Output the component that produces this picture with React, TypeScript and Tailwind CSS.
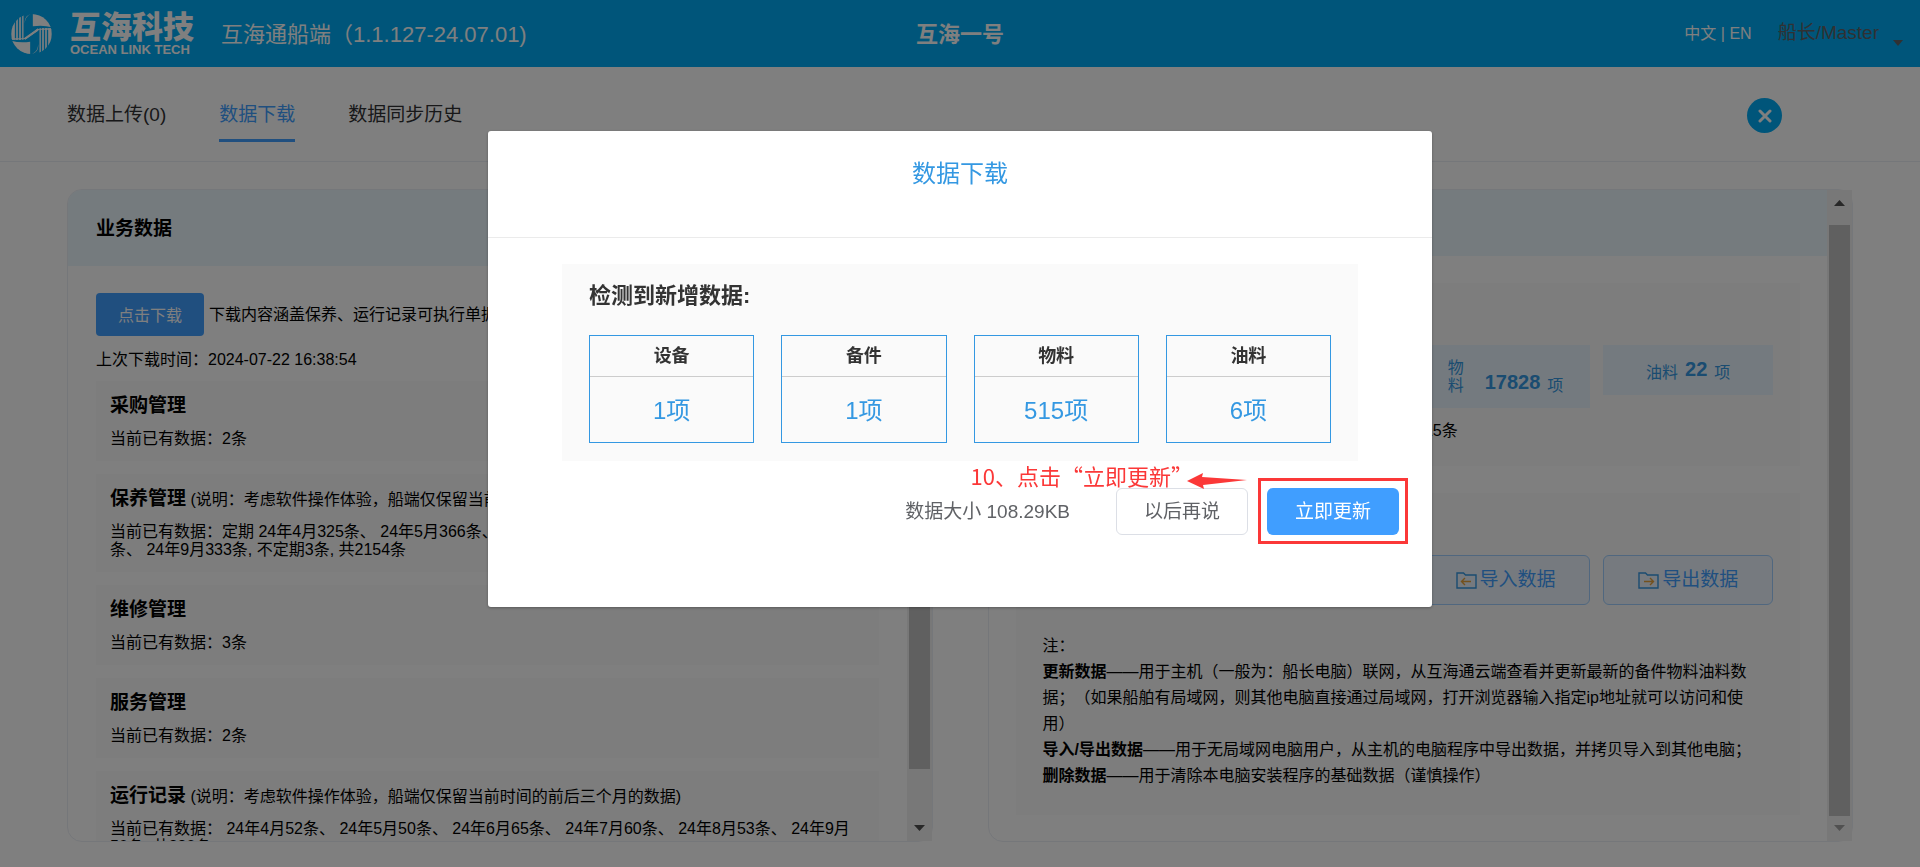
import type { ReactNode } from "react";

const tabs = ["数据上传(0)", "数据下载", "数据同步历史"];

const note = "(说明：考虑软件操作体验，船端仅保留当前时间的前后三个月的数据)";

const modules = [
  { name: "采购管理", note: "", text: "当前已有数据：2条" },
  {
    name: "保养管理",
    note,
    text: "当前已有数据：定期 24年4月325条、 24年5月366条、 24年6月371条、 24年7月378条、 24年8月378条、 24年9月333条, 不定期3条, 共2154条",
  },
  { name: "维修管理", note: "", text: "当前已有数据：3条" },
  { name: "服务管理", note: "", text: "当前已有数据：2条" },
  {
    name: "运行记录",
    note,
    text: "当前已有数据： 24年4月52条、 24年5月50条、 24年6月65条、 24年7月60条、 24年8月53条、 24年9月50条, 共330条",
  },
];

const totals = [
  { label: "设备", count: 356 },
  { label: "备件", count: 4120 },
  { label: "物料", count: 17828 },
  { label: "油料", count: 22 },
];

const updates = [
  { label: "设备", count: 1 },
  { label: "备件", count: 1 },
  { label: "物料", count: 515 },
  { label: "油料", count: 6 },
];

function Logo() {
  return (
    <svg viewBox="0 0 122 120" className="h-10 w-[41px]" fill="#fff">
      <clipPath id="logo-disc">
        <ellipse cx="61" cy="60" rx="61" ry="60" />
      </clipPath>
      <g clipPath="url(#logo-disc)">
        <path d="M65 0V37Q95 32 122 40V0Z" />
        <path d="M57 120V83Q27 88 0 80V120Z" />
        <path d="M0 20H11V77L0 75Z" />
        <path d="M15 10H20V78H15Z" />
        <path d="M24 4H29V78H24Z" />
        <path d="M33 0H37V77H33Z" />
        <path d="M59 0Q41 8 41 30V72L79 45L122 42V47H84L44 76Q41 78 41 76V20Q44 4 59 0Z" />
        <path d="M63 120Q81 112 81 90V48L43 75L0 78V73H38L78 44Q81 42 81 44V100Q78 116 63 120Z" />
        <path d="M41 76L79 45L81 50L44 76Z" />
        <path d="M85 43H89V120H85Z" />
        <path d="M93 42H98V116H93Z" />
        <path d="M102 42H107V110H102Z" />
        <path d="M111 43L122 45V100H111Z" />
      </g>
    </svg>
  );
}

function FolderIcon({ out = false }: { out?: boolean }) {
  return (
    <svg viewBox="0 0 21 17" className="h-[17px] w-[21px]" fill="none">
      <path d="M1 16V1H7.5L9.5 3H20V16Z" stroke="#3498e2" strokeWidth="1.4" />
      <path
        d={out ? "M6 9.5H15.5M12 6L15.5 9.5L12 13" : "M15 9.5H5.5M9 6L5.5 9.5L9 13"}
        stroke="#e6a23c"
        strokeWidth="1.4"
      />
    </svg>
  );
}

function Scrollbar({ thumb, atEnd = false }: { thumb: string; atEnd?: boolean }) {
  return (
    <div className="flex w-[25px] shrink-0 flex-col items-center bg-[#f1f1f1]">
      <svg viewBox="0 0 25 35" className="h-[35px] w-[25px] shrink-0" fill="#505050">
        <path d="M7 16H18L12.5 10Z" />
      </svg>
      <div className="flex w-[21px] flex-1 flex-col">
        <div className={"bg-[#c1c1c1] " + thumb} />
      </div>
      <svg
        viewBox="0 0 25 25"
        className="h-[25px] w-[25px] shrink-0"
        fill={atEnd ? "#a3a3a3" : "#505050"}
      >
        <path d="M7 9H18L12.5 15Z" />
      </svg>
    </div>
  );
}

function Card({ children, scrollbar }: { children: ReactNode; scrollbar: ReactNode }) {
  return (
    <section className="flex min-h-0 min-w-0 flex-1 rounded-[15px] border border-[#ebeef5]">
      <div className="min-w-0 flex-1 overflow-hidden rounded-l-[14px]">{children}</div>
      {scrollbar}
    </section>
  );
}

function ActionButton({ children }: { children: ReactNode }) {
  return (
    <button className="flex h-[50px] items-center justify-center gap-[3px] rounded-md border border-[#a0cfff] bg-[#ecf5ff] text-[19px] text-[#409eff]">
      {children}
    </button>
  );
}

function Header() {
  return (
    <header className="grid h-[67px] shrink-0 grid-cols-3 items-center bg-[#00abf5] text-white">
      <div className="flex items-center pl-[11px]">
        <Logo />
        <div className="ml-[18px] flex w-[126px] flex-col pt-0.5">
          <span className="text-[31px] leading-[30px] font-black whitespace-nowrap">互海科技</span>
          <span className="text-[13px] leading-[13px] font-bold whitespace-nowrap">
            OCEAN LINK TECH
          </span>
        </div>
        <span className="ml-[25px] pt-0.5 text-[22px] whitespace-nowrap">
          互海通船端（1.1.127-24.07.01)
        </span>
      </div>
      <h1 className="pt-0.5 text-center text-[22px] font-bold">互海一号</h1>
      <div className="flex items-center justify-end pr-[17px]">
        <button className="text-base">中文 | EN</button>
        <button className="ml-[26px] flex items-center text-[19px] text-[#606266]">
          船长/Master
          <svg viewBox="0 0 10 6" className="mt-[18px] ml-[14px] h-1.5 w-2.5" fill="#606266">
            <path d="M0 0H10L5 6Z" />
          </svg>
        </button>
      </div>
    </header>
  );
}

function DownloadDialog() {
  return (
    <div className="fixed inset-0 flex items-start justify-center bg-black/50 pt-[131px]">
      <div
        role="dialog"
        aria-label="数据下载"
        className="relative w-[944px] rounded-[3px] bg-white pb-[72px] shadow-[0_1px_3px_rgba(0,0,0,0.3)]"
      >
        <h2 className="h-[107px] border-b border-[#ebebeb] pt-[25px] text-center text-2xl leading-9 text-[#3498e2]">
          数据下载
        </h2>

        <div className="mx-[74px] mt-[26px] bg-[#fafafa] px-[27px] pt-[17px] pb-[18px]">
          <h3 className="text-[22px] leading-[30px] font-bold text-[#333]">检测到新增数据:</h3>
          <div className="mt-6 grid grid-cols-4 gap-[27px]">
            {updates.map((item) => (
              <div key={item.label} className="border border-[#3498e2] text-center">
                <div className="border-b border-[#ccc] text-lg leading-10 font-bold text-[#333]">
                  {item.label}
                </div>
                <div className="pt-[2px] text-2xl leading-[63px] text-[#3498e2]">{item.count}项</div>
              </div>
            ))}
          </div>
        </div>

        <div className="mt-[27px] flex items-center justify-end pr-[33px] text-[19px]">
          <span className="mr-[46px] pt-0.5 text-[#606266]">数据大小 108.29KB</span>
          <button className="h-[47px] w-[132px] rounded-md border border-[#dcdfe6] bg-white pt-0.5 text-[#606266]">
            以后再说
          </button>
          <button className="ml-[19px] h-[47px] w-[132px] rounded-md bg-[#409eff] pt-0.5 text-white">
            立即更新
          </button>
        </div>

        {/* step hint over the footer */}
        <div className="absolute top-[332px] right-[239px] font-['Noto_Sans_CJK_SC',sans-serif] text-[22px] leading-6 whitespace-nowrap text-[#fb3838]">
          10、点击“立即更新”
        </div>
        <svg
          viewBox="0 0 60 16"
          className="absolute top-[342px] right-[185px] h-4 w-[60px]"
          fill="#fb3838"
        >
          <path d="M0 8L16 0L15 4L60 7L16 12L17 16Z" />
        </svg>
        <div className="absolute top-[347px] right-6 h-[66px] w-[150px] border-3 border-[#fb3838]" />
      </div>
    </div>
  );
}

export default function App() {
  return (
    <div className="flex h-screen flex-col overflow-hidden bg-white font-['Liberation_Sans','Noto_Sans_CJK_SC',sans-serif] text-base text-black">
      <Header />

      <nav className="flex h-[95px] shrink-0 items-start justify-between border-b border-[#ebeef5] pt-6 pr-[138px] pl-[67px]">
        <div className="flex gap-[53px] text-[19px]">
          {tabs.map((tab, i) => (
            <button
              key={tab}
              className={
                i === 1
                  ? "h-[51px] border-b-3 border-[#409eff] text-[#409eff]"
                  : "h-[51px] border-b-3 border-transparent text-[#303133]"
              }
            >
              {tab}
            </button>
          ))}
        </div>
        <button
          aria-label="关闭"
          className="mt-[7px] flex size-[35px] items-center justify-center rounded-full bg-[#00abf5]"
        >
          <svg viewBox="0 0 14 14" className="size-3.5" stroke="#fff" strokeWidth="3" strokeLinecap="round">
            <path d="M2 2L12 12M12 2L2 12" />
          </svg>
        </button>
      </nav>

      <main className="flex min-h-0 flex-1 gap-[55px] px-[67px] pt-[27px] pb-[25px]">
        <Card scrollbar={<Scrollbar thumb="h-[92%]" />}>
          <h2 className="h-[76px] bg-[#ebf6fd] px-7 text-[19px] leading-[78px] font-bold">业务数据</h2>
          <div className="px-7 pt-[27px]">
            <div className="flex items-center gap-[5px]">
              <button className="h-[43px] w-[108px] shrink-0 rounded bg-[#409eff] pt-0.5 text-white">
                点击下载
              </button>
              <span className="whitespace-nowrap">
                下载内容涵盖保养、运行记录可执行单据及基础数据
              </span>
            </div>
            <p className="mt-[15px] mb-3 leading-[18px]">上次下载时间：2024-07-22 16:38:54</p>
            <div className="flex flex-col gap-[13px]">
              {modules.map((item) => (
                <div key={item.name} className="bg-[#fbfbfb] pt-[14px] pr-[22px] pb-[13px] pl-[14px]">
                  <h3 className="h-[22px] leading-[22px] whitespace-nowrap">
                    <b className="text-[19px]">{item.name}</b> {item.note}
                  </h3>
                  <p className="mt-[13px] leading-[18px]">{item.text}</p>
                </div>
              ))}
            </div>
          </div>
        </Card>

        <Card scrollbar={<Scrollbar thumb="flex-1" atEnd />}>
          <h2 className="h-[66px] bg-[#ebf6fd] px-[27px] text-[19px] leading-[68px] font-bold">基础数据</h2>
          <div className="flex flex-col gap-[27px] p-[27px]">
            <div className="bg-[#fbfbfb] p-[27px]">
              <h3 className="mb-[13px] text-[19px] leading-[22px] font-bold">当前数据</h3>
              <div className="grid grid-cols-4 items-start gap-[13px] pl-[13px]">
                {totals.map((item) => (
                  <div
                    key={item.label}
                    className="flex items-end justify-center bg-[#e8f4fe] pt-[14px] pb-[13px] text-[#3498e2]"
                  >
                    <span
                      className={
                        item.count > 9999
                          ? "w-[30px] leading-[18px] break-all pr-3"
                          : "leading-[18px]"
                      }
                    >
                      {item.label}
                    </span>
                    <b className="mx-[7px] pb-0.5 text-xl leading-[21px]">{item.count}</b>
                    <span className="leading-[18px]">项</span>
                  </div>
                ))}
              </div>
              <p className="mt-[14px] -mb-px leading-[18px]">
                上次更新时间：2024-07-22 16:37:12，待更新数据：515条
              </p>
            </div>

            <div className="bg-[#fbfbfb] px-[27px] pt-[27px] pb-[26px]">
              <h3 className="mb-[13px] text-[19px] leading-[22px] font-bold">数据操作</h3>
              <div className="grid grid-cols-4 gap-[13px] pl-[13px]">
                <ActionButton>更新数据</ActionButton>
                <ActionButton>删除数据</ActionButton>
                <ActionButton>
                  <FolderIcon />
                  导入数据
                </ActionButton>
                <ActionButton>
                  <FolderIcon out />
                  导出数据
                </ActionButton>
              </div>
              <div className="mt-7 leading-[26px] [text-spacing-trim:space-all]">
                <p>注：</p>
                <p>
                  <b>更新数据</b>
                  ——用于主机（一般为：船长电脑）联网，从互海通云端查看并更新最新的备件物料油料数据；（如果船舶有局域网，则其他电脑直接通过局域网，打开浏览器输入指定ip地址就可以访问和使用）
                </p>
                <p>
                  <b>导入/导出数据</b>
                  ——用于无局域网电脑用户，从主机的电脑程序中导出数据，并拷贝导入到其他电脑；
                </p>
                <p>
                  <b>删除数据</b>——用于清除本电脑安装程序的基础数据（谨慎操作）
                </p>
              </div>
            </div>
          </div>
        </Card>
      </main>

      <DownloadDialog />
    </div>
  );
}
